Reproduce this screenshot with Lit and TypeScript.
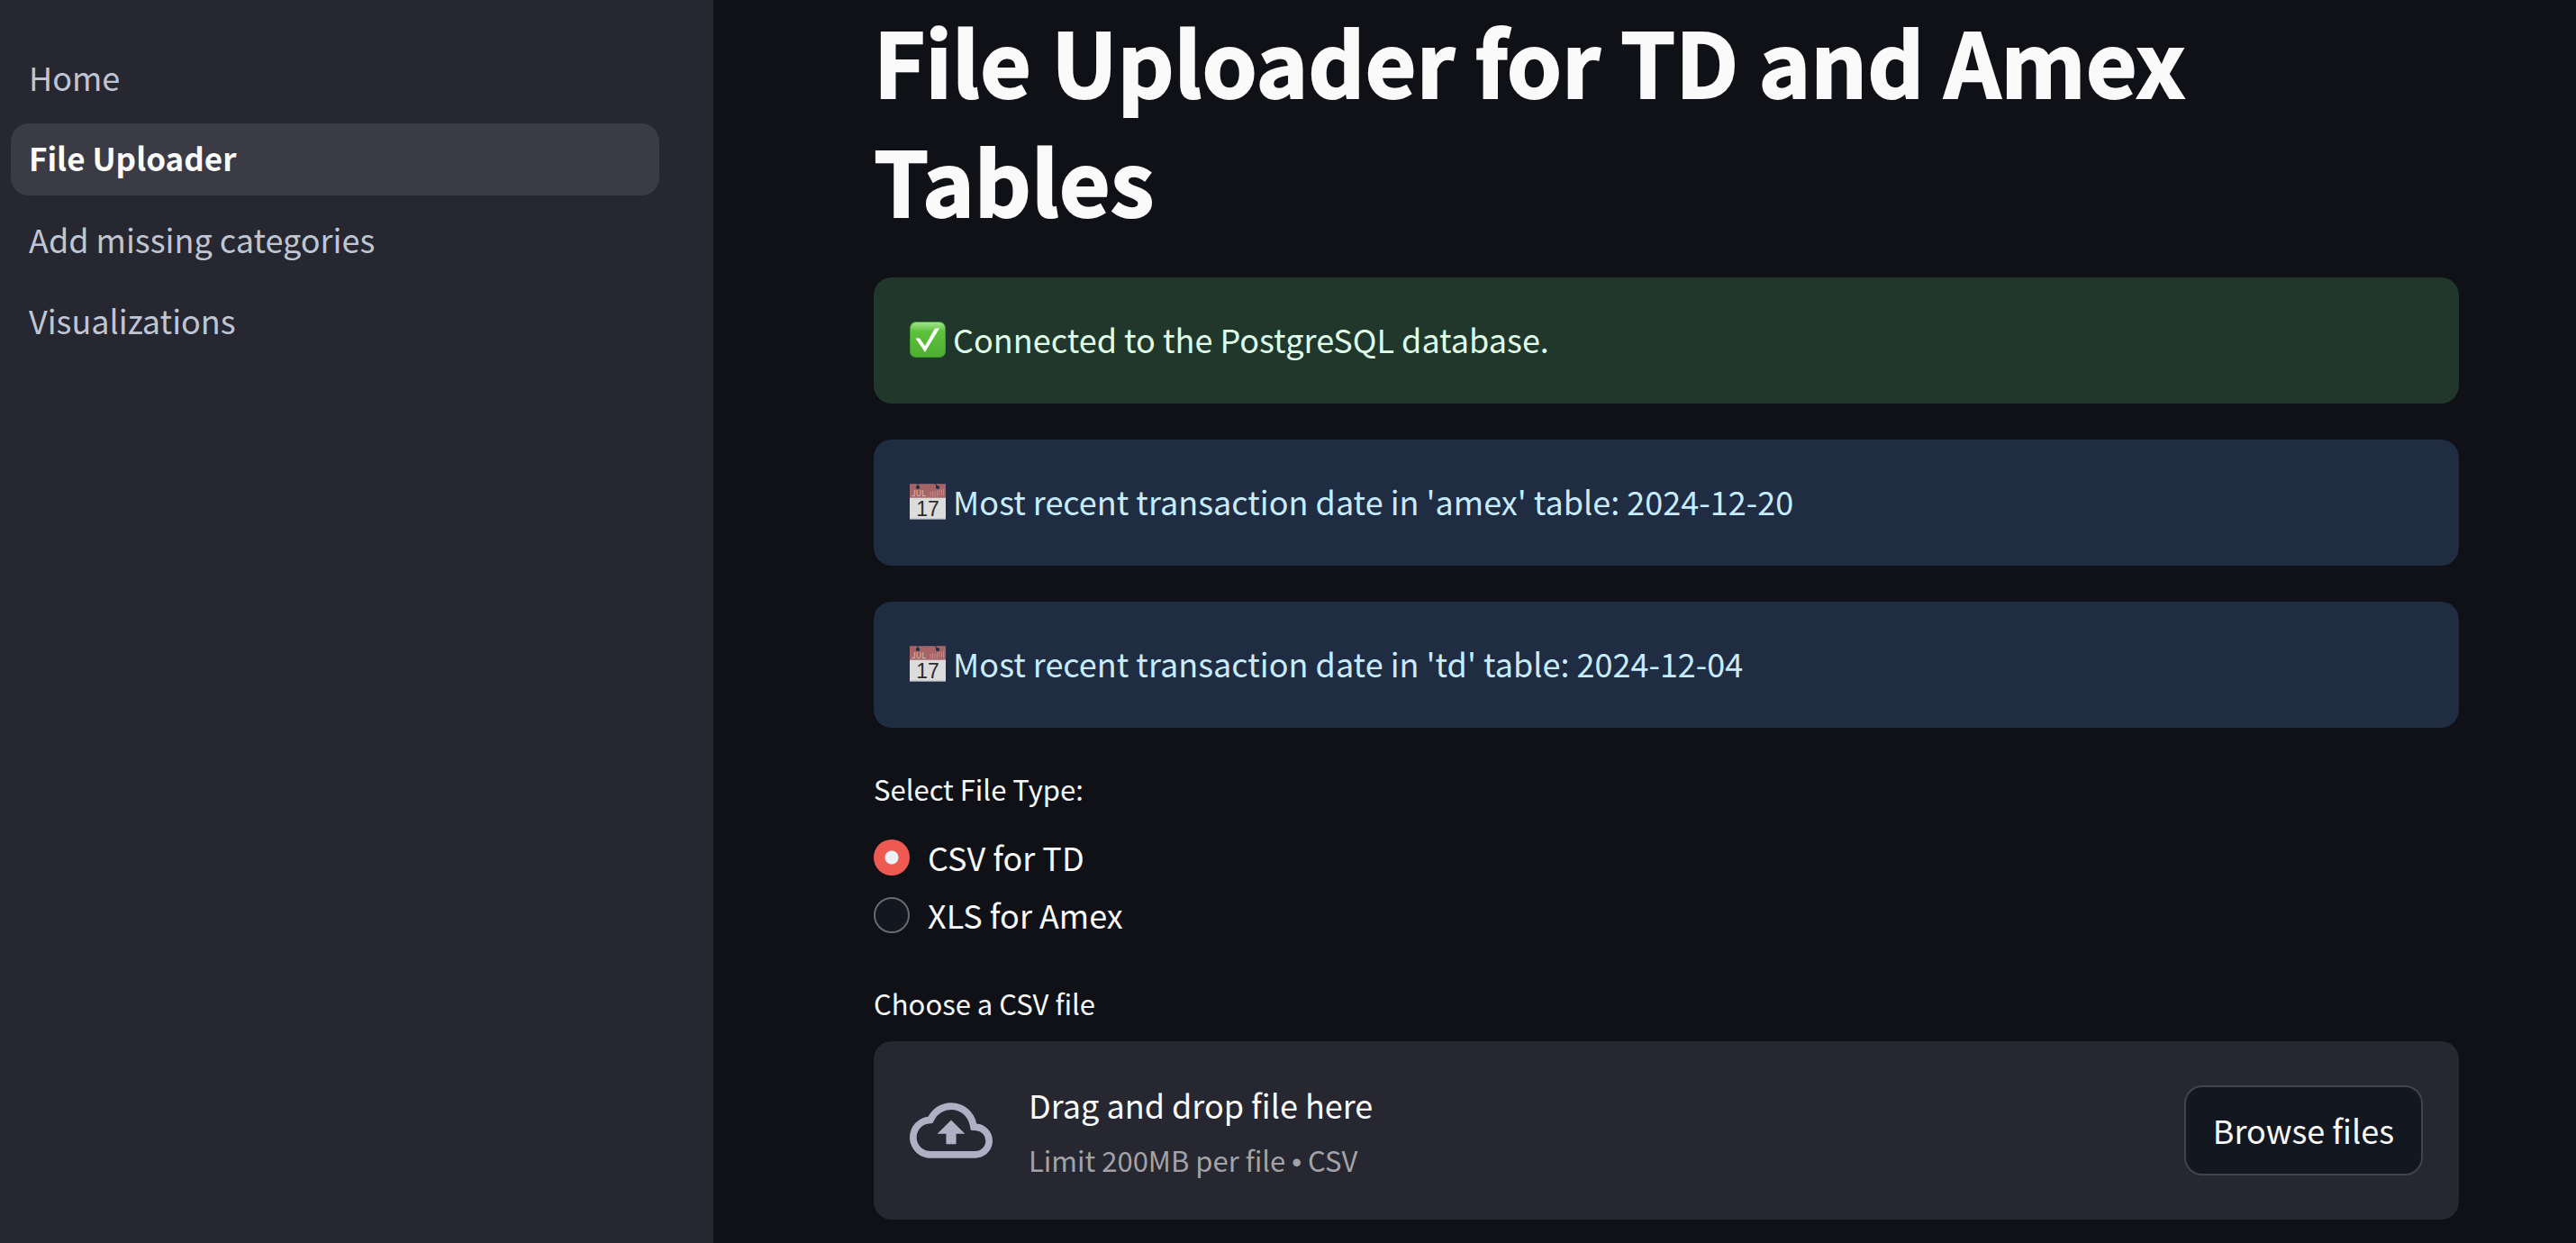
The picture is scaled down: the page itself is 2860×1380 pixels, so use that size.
import { LitElement, html, css } from "lit";
import { customElement, state } from "lit/decorators.js";

const checkIcon = html`<svg class="emoji" viewBox="0 0 40 40" role="img" aria-label="Check mark">
  <defs>
    <linearGradient id="g" x1="0" y1="0" x2="0" y2="1">
      <stop offset="0" stop-color="#a3e08f" />
      <stop offset="0.14" stop-color="#7ed263" />
      <stop offset="0.26" stop-color="#5cc23c" />
      <stop offset="1" stop-color="#4fae31" />
    </linearGradient>
  </defs>
  <rect x="0" y="0" width="40" height="40" rx="7" fill="#3f9a2a" />
  <rect x="1" y="1" width="38" height="38" rx="6" fill="url(#g)" />
  <path d="M6.500 18.500h4.500l6 8.500L28 7.500h5L17 34z" fill="#fff" />
</svg>`;

const calendarIcon = html`<svg class="emoji" viewBox="0 0 40 40" role="img" aria-label="Calendar">
  <rect width="40" height="40" fill="#dcdcdc" />
  <rect y="38.800" width="40" height="1.200" fill="#8d939c" />
  <rect width="40" height="15.500" fill="#a76464" />
  <rect width="40" height="1" fill="#8b5a60" />
  <rect y="14.800" width="40" height="1.200" fill="#b98a8a" />
  <path d="M23 9v5M25.500 8v6M28 9v5M30.500 7.500v6.500M33 7v6M35.500 6.500v6.500M37.500 6v7" stroke="#c08a88" stroke-width="1" />
  <circle cx="9" cy="4" r="2.100" fill="#1f2c42" />
  <circle cx="31" cy="4" r="2.100" fill="#1f2c42" />
  <path d="M9 0v3M28.500 0l1.500 3" stroke="#1f2c42" stroke-width="1" />
  <text x="2" y="13.500" class="month">JUL</text>
  <text x="20" y="35.500" text-anchor="middle" class="day">17</text>
</svg>`;

const cloudIcon = html`<svg class="cloud" viewBox="0 0 24 24" aria-hidden="true">
  <path
    fill="currentColor"
    d="M19.350 10.040A7.490 7.490 0 0 0 12 4C9.110 4 6.600 5.640 5.350 8.040A5.994 5.994 0 0 0 0 14c0 3.310 2.690 6 6 6h13c2.760 0 5-2.240 5-5 0-2.640-2.050-4.780-4.650-4.960zM19 18H6c-2.210 0-4-1.790-4-4 0-2.050 1.530-3.760 3.560-3.970l1.070-.11.5-.95A5.469 5.469 0 0 1 12 6c2.620 0 4.880 1.860 5.390 4.430l.3 1.500 1.530.11A2.980 2.980 0 0 1 22 15c0 1.650-1.350 3-3 3zM8 13h2.550v3h2.900v-3H16l-4-4-4 4z"
  />
</svg>`;

@customElement("app-root")
export class AppRoot extends LitElement {
  @state() private fileType = "td";

  private pages = ["Home", "File Uploader", "Add missing categories", "Visualizations"];
  private current = "File Uploader";
  private alerts = [
    { kind: "success", icon: checkIcon, text: "Connected to the PostgreSQL database." },
    { kind: "info", icon: calendarIcon, text: "Most recent transaction date in 'amex' table: 2024-12-20" },
    { kind: "info", icon: calendarIcon, text: "Most recent transaction date in 'td' table: 2024-12-04" },
  ];
  private options = [
    { value: "td", label: "CSV for TD" },
    { value: "amex", label: "XLS for Amex" },
  ];

  static styles = css`
    :host {
      display: flex;
      min-height: 100vh;
      background: #0f1116;
      color: #fafafa;
      font-family: "Noto Sans CJK SC", "Noto Sans", sans-serif;
      font-size: 36px;
      line-height: 60px;
    }
    * {
      box-sizing: border-box;
    }
    .sidebar {
      flex: none;
      width: 792px;
      padding: 47px 60px 40px 12px;
      background: #262730;
    }
    .nav {
      display: flex;
      flex-direction: column;
      gap: 10px;
    }
    .link {
      padding: 8px 20px 12px;
      border-radius: 20px;
      color: #bfc5d3;
      text-decoration: none;
    }
    .link.active {
      background: #3b3b45;
      color: #fafafa;
      font-size: 35px;
      font-weight: 700;
    }
    .main {
      flex: 1;
      min-width: 0;
      padding: 0 130px 24px 178px;
    }
    .title {
      margin: 0 0 44px;
      font-size: 98px;
      line-height: 132px;
      font-weight: 700;
      -webkit-text-stroke: 2px currentColor;
    }
    .alerts {
      display: flex;
      flex-direction: column;
      gap: 40px;
    }
    .alert {
      padding: 38px 40px 42px;
      border-radius: 20px;
    }
    .success {
      background: #22372b;
      color: #dffde9;
    }
    .info {
      background: #1f2c42;
      color: #c7ebff;
    }
    .emoji {
      width: 40px;
      height: 40px;
      vertical-align: -5px;
    }
    .month {
      font-size: 9px;
      fill: #d9bcbc;
    }
    .day {
      font-family: "Liberation Sans", sans-serif;
      font-size: 23px;
      fill: #2c2c2c;
    }
    .types {
      margin: 38px 0 0;
      padding: 0;
      border: 0;
    }
    .label {
      display: block;
      padding: 0;
      font-size: 31px;
      line-height: 60px;
    }
    .types .label {
      margin-bottom: 14px;
    }
    .option {
      display: flex;
      align-items: center;
      gap: 20px;
      height: 64px;
    }
    .option-text {
      padding-bottom: 2px;
    }
    .radio {
      appearance: none;
      width: 40px;
      height: 40px;
      margin: 0;
      border: 2px solid #68696d;
      border-radius: 50%;
      background: #131720;
    }
    .radio:checked {
      border: 0;
      background: radial-gradient(circle, #f0f2f6 7px, #ee5a52 8px);
    }
    .upload {
      display: flex;
      flex-direction: column;
      gap: 12px;
      margin-top: 36px;
    }
    .dropzone {
      display: flex;
      align-items: center;
      gap: 40px;
      padding: 38px 40px;
      border-radius: 20px;
      background: #262730;
    }
    .cloud {
      flex: none;
      width: 92px;
      height: 92px;
      color: #aeb1c4;
    }
    .hint {
      display: flex;
      flex: 1;
      flex-direction: column;
      gap: 4px;
      padding-top: 2px;
    }
    .limit {
      font-size: 31px;
      line-height: 56px;
      color: #a3a3a7;
    }
    .bullet {
      font-family: "Liberation Sans", sans-serif;
      line-height: 1;
    }
    .browse {
      padding: 17px 30px 19px;
      border: 2px solid #41444c;
      border-radius: 20px;
      background: #131720;
      color: inherit;
      font: inherit;
    }
  `;

  render() {
    return html`
      <aside class="sidebar">
        <nav class="nav">
          ${this.pages.map(
            (p) => html`<a href="#" class="link ${p === this.current ? "active" : ""}">${p}</a>`
          )}
        </nav>
      </aside>
      <main class="main">
        <h1 class="title">File Uploader for TD and Amex Tables</h1>
        <div class="alerts">
          ${this.alerts.map(
            (a) => html`<div class="alert ${a.kind}" role="alert">${a.icon} ${a.text}</div>`
          )}
        </div>
        <fieldset class="types">
          <legend class="label">Select File Type:</legend>
          ${this.options.map(
            (o) => html`<label class="option">
              <input
                class="radio"
                type="radio"
                name="type"
                .checked=${this.fileType === o.value}
                @change=${() => (this.fileType = o.value)}
              />
              <span class="option-text">${o.label}</span>
            </label>`
          )}
        </fieldset>
        <section class="upload" aria-labelledby="choose">
          <span class="label" id="choose">Choose a CSV file</span>
          <div class="dropzone">
            ${cloudIcon}
            <div class="hint">
              <div>Drag and drop file here</div>
              <div class="limit">Limit 200MB per file <span class="bullet">•</span> CSV</div>
            </div>
            <button class="browse" type="button">Browse files</button>
          </div>
        </section>
      </main>
    `;
  }
}
